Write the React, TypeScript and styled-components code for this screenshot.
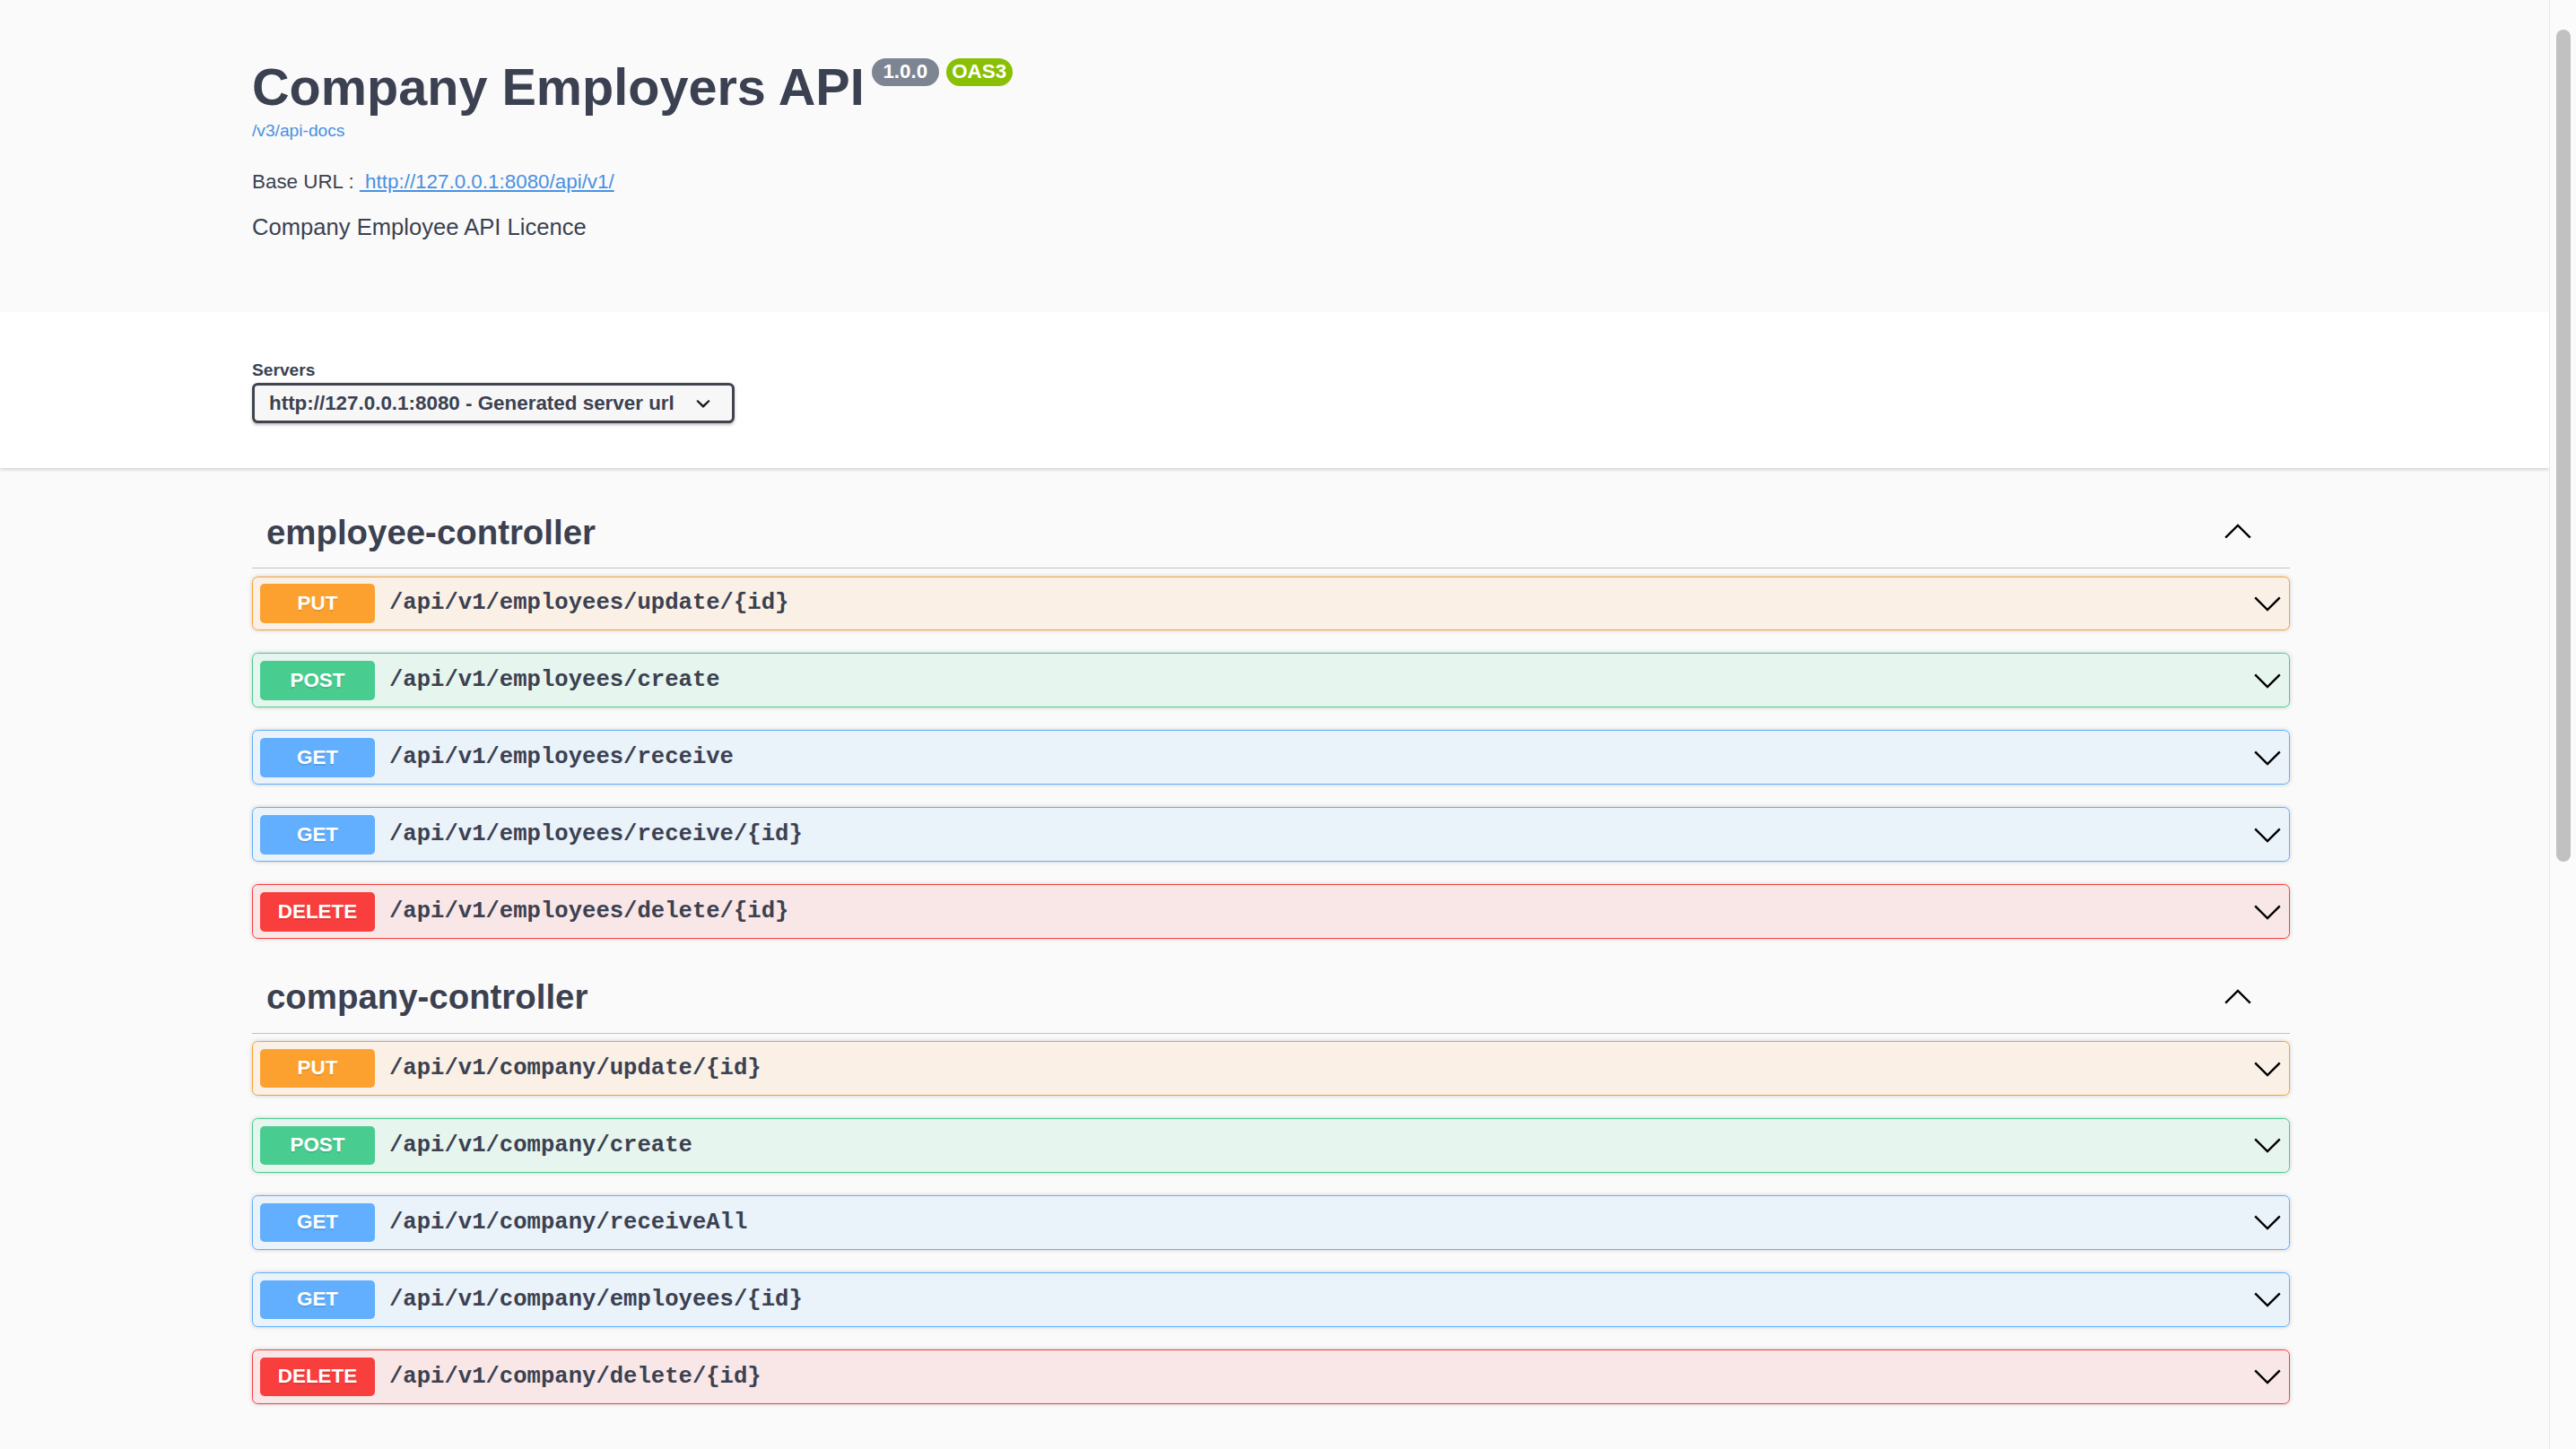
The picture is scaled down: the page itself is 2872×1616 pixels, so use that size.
import React from 'react';
import styled, { createGlobalStyle } from 'styled-components';

type Method = 'PUT' | 'POST' | 'GET' | 'DELETE';

interface Operation {
  method: Method;
  path: string;
}

interface Tag {
  name: string;
  operations: Operation[];
}

const METHOD_COLORS: Record<Method, { main: string; rgb: string }> = {
  PUT: { main: '#fca130', rgb: '252, 161, 48' },
  POST: { main: '#49cc90', rgb: '73, 204, 144' },
  GET: { main: '#61affe', rgb: '97, 175, 254' },
  DELETE: { main: '#f93e3e', rgb: '249, 62, 62' },
};

const TAGS: Tag[] = [
  {
    name: 'employee-controller',
    operations: [
      { method: 'PUT', path: '/api/v1/employees/update/{id}' },
      { method: 'POST', path: '/api/v1/employees/create' },
      { method: 'GET', path: '/api/v1/employees/receive' },
      { method: 'GET', path: '/api/v1/employees/receive/{id}' },
      { method: 'DELETE', path: '/api/v1/employees/delete/{id}' },
    ],
  },
  {
    name: 'company-controller',
    operations: [
      { method: 'PUT', path: '/api/v1/company/update/{id}' },
      { method: 'POST', path: '/api/v1/company/create' },
      { method: 'GET', path: '/api/v1/company/receiveAll' },
      { method: 'GET', path: '/api/v1/company/employees/{id}' },
      { method: 'DELETE', path: '/api/v1/company/delete/{id}' },
    ],
  },
];

const Chevron = ({ up }: { up?: boolean }) => (
  <ChevronSvg viewBox="0 0 32 32" aria-hidden>
    <polyline
      points={up ? '2.2,22.6 16,8.9 29.8,22.6' : '2.2,9.4 16,23.1 29.8,9.4'}
      fill="none"
      stroke="#000"
      strokeWidth="2.4"
    />
  </ChevronSvg>
);

const App = () => {
  return (
    <>
      <GlobalStyle />
      <Page>
        <Main>
          <Wrapper>
            <Info>
              <Title>
                <span>Company Employers API</span>
                <Badge>{' 1.0.0 '}</Badge>
                <Badge stamp>OAS3</Badge>
              </Title>
              <SpecLink>/v3/api-docs</SpecLink>
              <Description>
                <BaseUrl>
                  Base URL : <a> http://127.0.0.1:8080/api/v1/</a>
                </BaseUrl>
                <Licence>Company Employee API Licence</Licence>
              </Description>
            </Info>
          </Wrapper>

          <SchemeContainer>
            <Wrapper>
              <ServersTitle>Servers</ServersTitle>
              <ServerSelect>
                <span>http://127.0.0.1:8080 - Generated server url</span>
                <SelectArrow viewBox="0 0 20 20" aria-hidden>
                  <path
                    fill="#1b1b1b"
                    d="M13.418 7.859a.695.695 0 0 1 .978 0 .68.68 0 0 1 0 .969l-3.908 3.83a.697.697 0 0 1-.979 0l-3.908-3.83a.68.68 0 0 1 0-.969.695.695 0 0 1 .978 0L10 11l3.418-3.141z"
                  />
                </SelectArrow>
              </ServerSelect>
            </Wrapper>
          </SchemeContainer>

          <Wrapper>
            {TAGS.map((tag) => (
              <TagSection key={tag.name}>
                <TagHeader>
                  <TagName>{tag.name}</TagName>
                  <TagArrow>
                    <Chevron up />
                  </TagArrow>
                </TagHeader>
                {tag.operations.map((op) => (
                  <OpBlock key={op.method + op.path} method={op.method}>
                    <MethodLabel method={op.method}>{op.method}</MethodLabel>
                    <OpPath>{op.path}</OpPath>
                    <Chevron />
                  </OpBlock>
                ))}
              </TagSection>
            ))}
          </Wrapper>
        </Main>

        <ScrollTrack>
          <ScrollThumb />
        </ScrollTrack>
      </Page>
    </>
  );
};

const GlobalStyle = createGlobalStyle`
  html, body {
    margin: 0;
    padding: 0;
    background: #fafafa;
  }
  body {
    font-family: "Liberation Sans", Arial, sans-serif;
    color: #3b4151;
  }
  * {
    box-sizing: border-box;
  }
`;

const Page = styled.div`
  display: flex;
  width: 100%;
  height: 100vh;
  overflow: hidden;
  background: #fafafa;
`;

const Main = styled.div`
  flex: 1;
  min-width: 0;
  overflow: hidden;
`;

const Wrapper = styled.div`
  max-width: 2336px;
  margin: 0 auto;
  padding: 0 36px 0 28px;
`;

const Info = styled.div`
  padding: 64px 0 80px;
`;

const Title = styled.h2`
  display: flex;
  align-items: flex-start;
  margin: 0;
  font-size: 57.6px;
  line-height: 66px;
  font-weight: 700;
  color: #3b4151;
`;

const Badge = styled.small<{ stamp?: boolean }>`
  margin: 1px 0 0 8px;
  padding: 3.3px 6.4px;
  border-radius: 91px;
  background: ${(p) => (p.stamp ? '#89bf04' : '#7d8492')};
  color: #fff;
  font-size: 22.4px;
  line-height: 24px;
  font-weight: 700;
  white-space: pre;
`;

const SpecLink = styled.a`
  display: block;
  margin-top: 5px;
  font-size: 19.2px;
  line-height: 22px;
  color: #4990e2;
`;

const Description = styled.div`
  margin-top: 33px;
  color: #3b4151;
`;

const BaseUrl = styled.p`
  margin: 0;
  font-size: 22.4px;
  line-height: 25.7px;

  a {
    color: #4990e2;
    text-decoration: underline;
    text-underline-offset: 2px;
    white-space: pre;
  }
`;

const Licence = styled.p`
  margin: 22.9px 0 0;
  font-size: 25.6px;
  line-height: 29.4px;
`;

const SchemeContainer = styled.section`
  background: #fff;
  box-shadow: 0 1.6px 3.2px 0 rgba(0, 0, 0, 0.15);
  padding: 48px 0 49.5px;
  margin-bottom: 32px;
`;

const ServersTitle = styled.div`
  margin: 6px 0 2.7px;
  font-size: 19.2px;
  line-height: 22px;
  font-weight: 700;
  color: #3b4151;
`;

const ServerSelect = styled.div`
  display: inline-flex;
  align-items: center;
  padding: 8px 16px;
  border: 3.2px solid #41444e;
  border-radius: 6.4px;
  background: #f7f7f7;
  box-shadow: 0 1.6px 3.2px 0 rgba(0, 0, 0, 0.25);
  font-size: 22.4px;
  line-height: 23.6px;
  font-weight: 700;
  color: #3b4151;
`;

const SelectArrow = styled.svg`
  width: 32px;
  height: 32px;
  margin: -4.2px 0 -4.2px 16.5px;
  flex-shrink: 0;
`;

const TagSection = styled.div`
  display: flex;
  flex-direction: column;
`;

const TagHeader = styled.div`
  display: flex;
  align-items: center;
  padding: 16px 32px 16px 16px;
  margin-bottom: 8.5px;
  border-bottom: 1.6px solid rgba(59, 65, 81, 0.3);
`;

const TagName = styled.h3`
  flex: 1;
  margin: 0;
  font-size: 38.4px;
  line-height: 47.2px;
  font-weight: 700;
  color: #3b4151;
`;

const TagArrow = styled.div`
  display: flex;
  margin-right: 9.6px;
`;

const ChevronSvg = styled.svg`
  width: 32px;
  height: 32px;
  flex-shrink: 0;
`;

const OpBlock = styled.div<{ method: Method }>`
  display: flex;
  align-items: center;
  padding: 7.6px 8px;
  margin-bottom: 25.1px;
  border: 1.6px solid ${(p) => METHOD_COLORS[p.method].main};
  border-radius: 6.4px;
  background: rgba(${(p) => METHOD_COLORS[p.method].rgb}, 0.1);
  box-shadow: 0 0 4.8px rgba(0, 0, 0, 0.19);
`;

const MethodLabel = styled.span<{ method: Method }>`
  min-width: 128px;
  padding: 9.6px 0;
  border-radius: 4.8px;
  background: ${(p) => METHOD_COLORS[p.method].main};
  color: #fff;
  font-size: 22.4px;
  line-height: 24.5px;
  font-weight: 700;
  text-align: center;
  text-shadow: 0 1.6px 0 rgba(0, 0, 0, 0.1);
`;

const OpPath = styled.span`
  flex: 1;
  padding: 0 16px;
  font-family: "Liberation Mono", "Courier New", monospace;
  font-size: 25.6px;
  font-weight: 700;
  color: #3b4151;
`;

const ScrollTrack = styled.div`
  flex: 0 0 30px;
  height: 100%;
  padding: 33px 0 0 7px;
  border-left: 1px solid #e8e8e8;
  background: #fbfbfb;
`;

const ScrollThumb = styled.div`
  width: 16px;
  height: 928px;
  border-radius: 8px;
  background: #c1c1c1;
`;

export default App;
